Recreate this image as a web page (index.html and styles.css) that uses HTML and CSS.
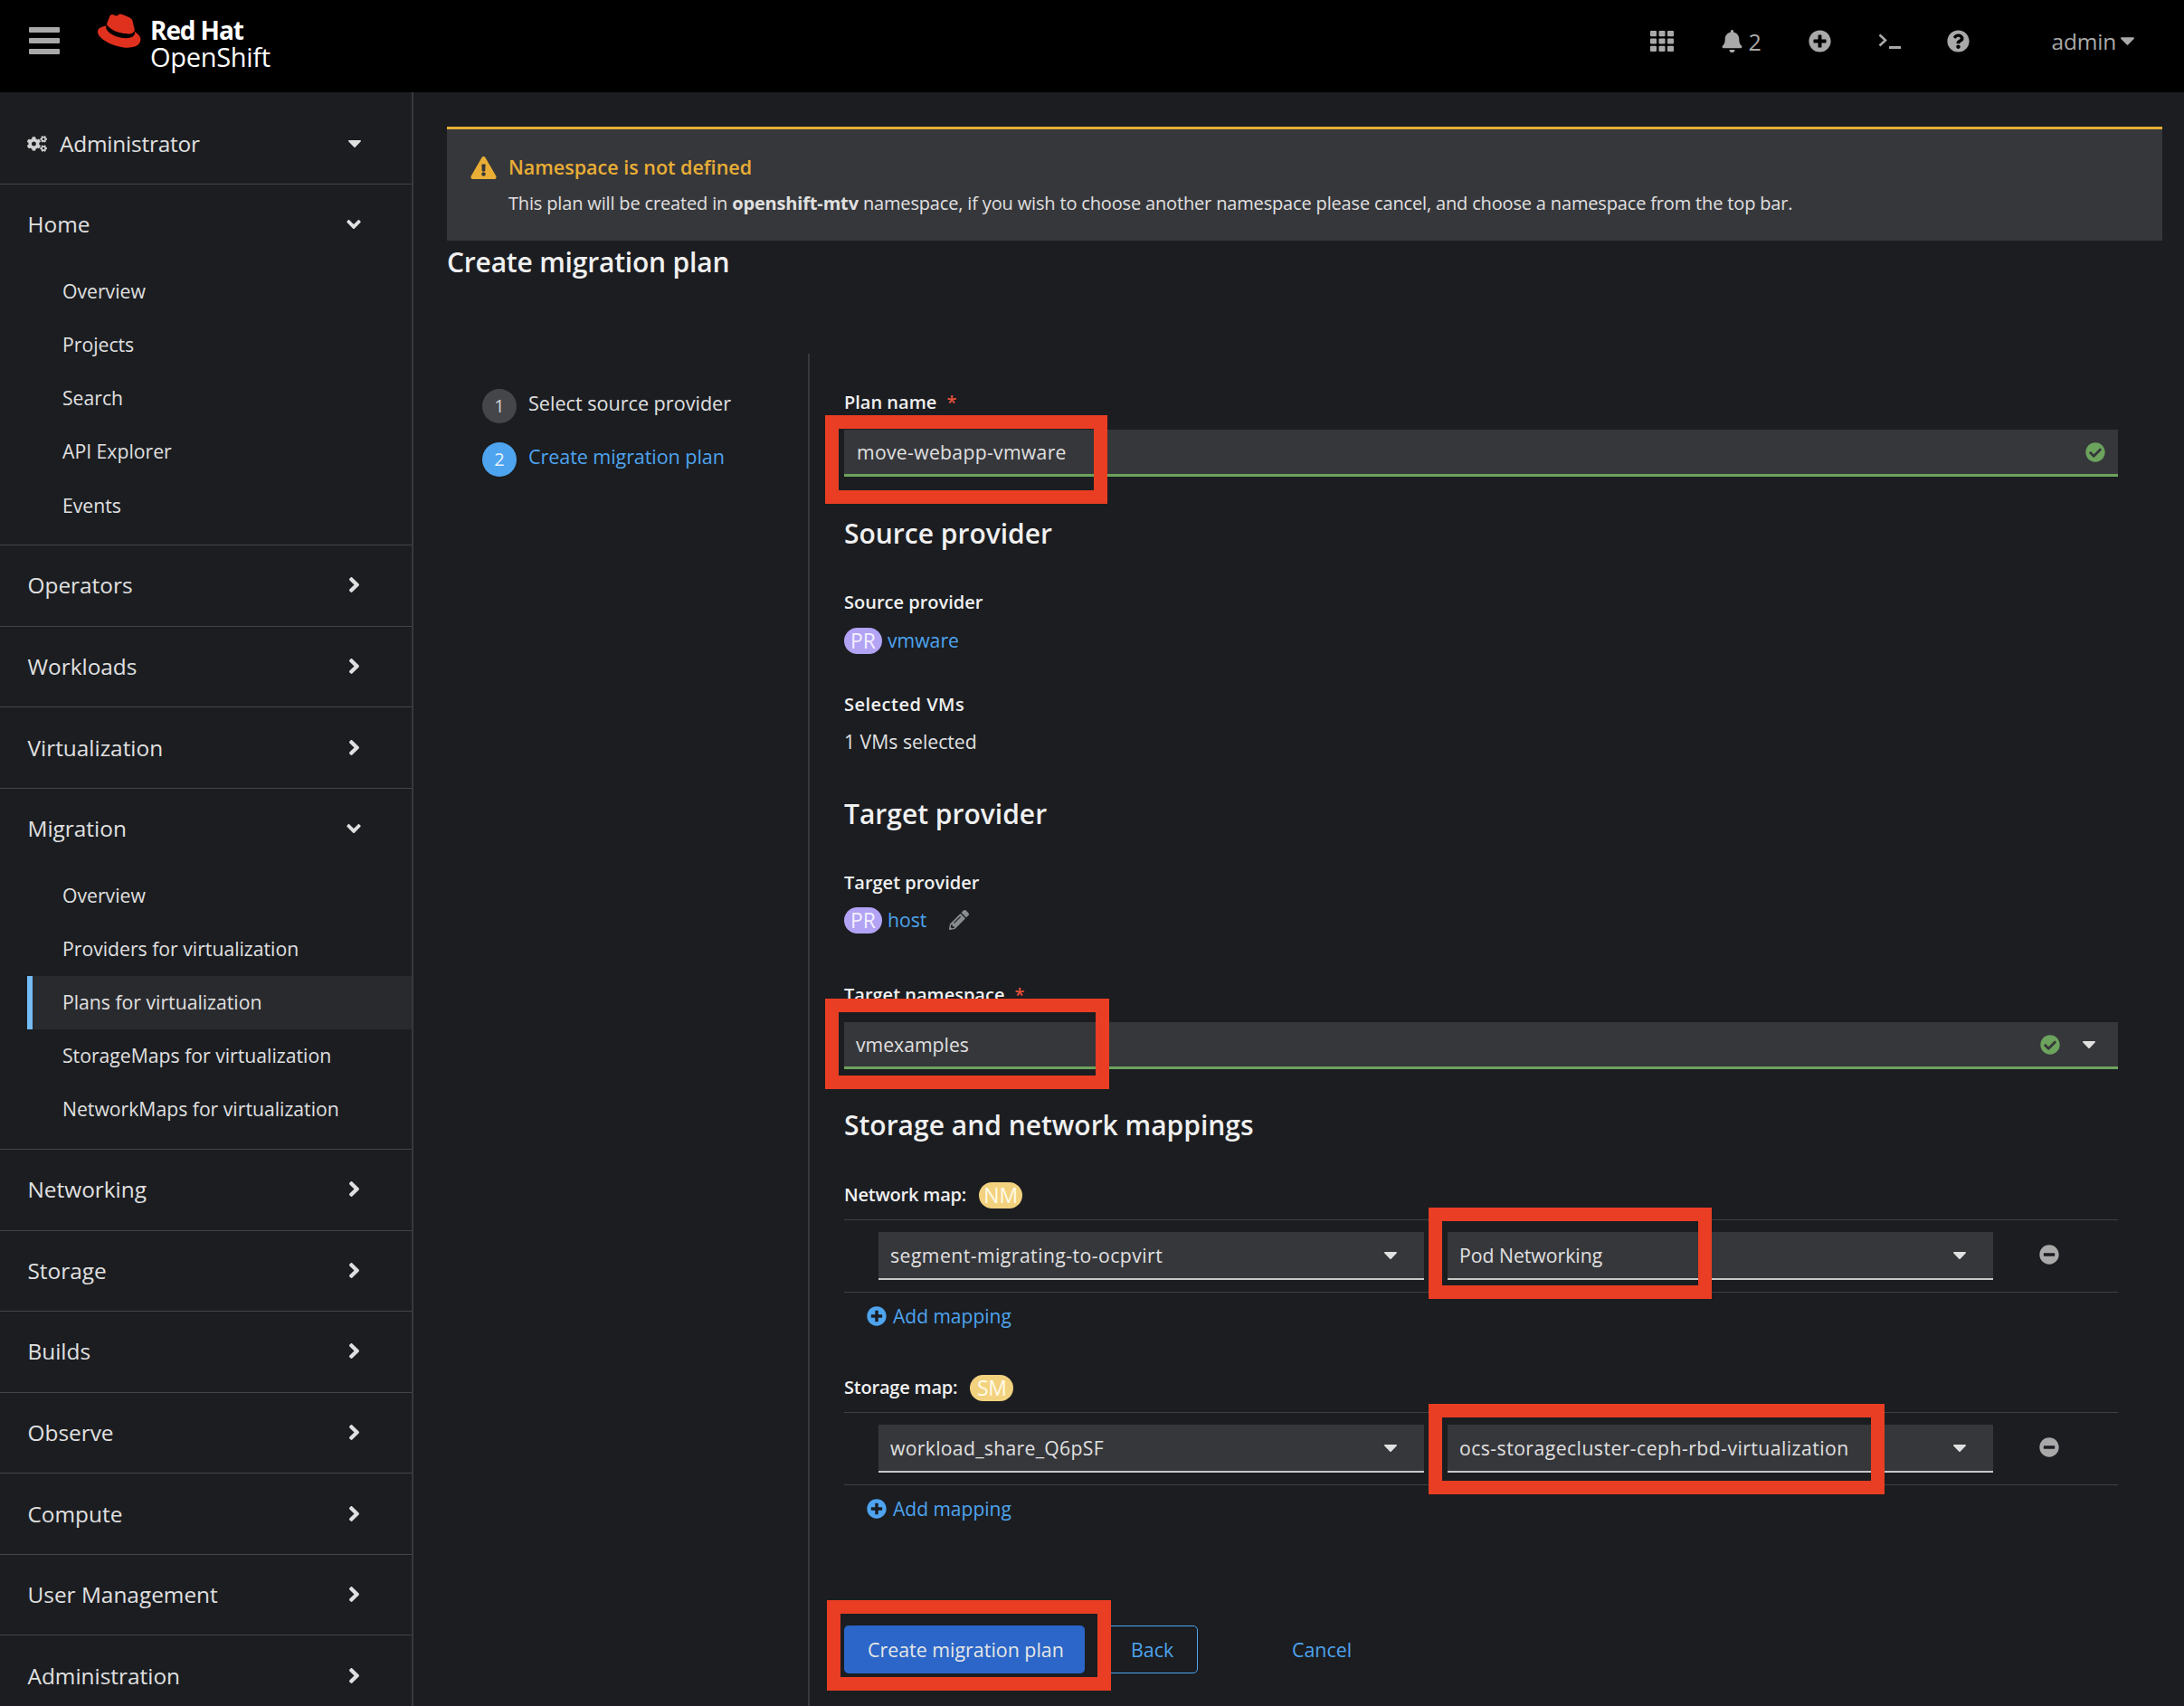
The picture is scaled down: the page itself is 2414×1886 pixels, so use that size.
FILE: index.html
```html
<!doctype html>
<html lang="en">
<head>
    <meta charset="UTF-8">
    <meta name="viewport" content="width=device-width, initial-scale=1.0">
    <title>Create migration plan</title>
    <link rel="stylesheet" href="styles.css">
</head>
<body>
    <svg class="icon-defs" width="0" height="0">
        <symbol id="caret" viewBox="10 192 300 170"><path d="M31.3 192h257.3c17.8 0 26.7 21.5 14.1 34.1L174.1 354.8c-7.8 7.8-20.5 7.8-28.3 0L17.2 226.1C4.6 213.5 13.5 192 31.3 192z"/></symbol>
        <symbol id="angle-down" viewBox="0 152 320 208"><path d="M143 352.3L7 216.3c-9.4-9.4-9.4-24.6 0-33.9l22.6-22.6c9.4-9.4 24.6-9.4 33.9 0l96.4 96.4 96.4-96.4c9.4-9.4 24.6-9.4 33.9 0l22.6 22.6c9.4 9.4 9.4 24.6 0 33.9l-136 136c-9.2 9.4-24.4 9.4-33.8 0z"/></symbol>
        <symbol id="angle-right" viewBox="24 96 208 320"><path d="M224.3 273l-136 136c-9.4 9.4-24.6 9.4-33.9 0l-22.6-22.6c-9.4-9.4-9.4-24.6 0-33.9l96.4-96.4-96.4-96.4c-9.4-9.4-9.4-24.6 0-33.9L54.3 103c9.4-9.4 24.6-9.4 33.9 0l136 136c9.5 9.4 9.5 24.6.1 34z"/></symbol>
        <symbol id="check-circle" viewBox="0 0 512 512"><path d="M504 256c0 136.967-111.033 248-248 248S8 392.967 8 256 119.033 8 256 8s248 111.033 248 248zM227.314 387.314l184-184c6.248-6.248 6.248-16.379 0-22.627l-22.627-22.627c-6.248-6.249-16.379-6.249-22.628 0L216 308.118l-70.059-70.059c-6.248-6.248-16.379-6.248-22.628 0l-22.627 22.627c-6.248 6.248-6.248 16.379 0 22.627l104 104c6.249 6.249 16.379 6.249 22.628.001z"/></symbol>
        <symbol id="plus-circle" viewBox="0 0 512 512"><path d="M256 8C119 8 8 119 8 256s111 248 248 248 248-111 248-248S393 8 256 8zm144 276c0 6.6-5.4 12-12 12h-92v92c0 6.6-5.4 12-12 12h-56c-6.6 0-12-5.4-12-12v-92h-92c-6.6 0-12-5.4-12-12v-56c0-6.6 5.4-12 12-12h92v-92c0-6.6 5.4-12 12-12h56c6.6 0 12 5.4 12 12v92h92c6.6 0 12 5.4 12 12v56z"/></symbol>
        <symbol id="minus-circle" viewBox="0 0 512 512"><path d="M256 8C119 8 8 119 8 256s111 248 248 248 248-111 248-248S393 8 256 8zM124 296c-6.6 0-12-5.4-12-12v-56c0-6.6 5.4-12 12-12h264c6.6 0 12 5.4 12 12v56c0 6.6-5.4 12-12 12H124z"/></symbol>
    </svg>

    <header class="masthead">
        <svg class="hamburger" viewBox="0 0 34 30"><rect y="0" width="34" height="6" rx="1"/><rect y="12" width="34" height="6" rx="1"/><rect y="24" width="34" height="6" rx="1"/></svg>
        <svg class="hat" viewBox="0 0 52 39"><path d="M34.5 22.5c3.3 0 8.2-.7 8.2-4.6 0-.3 0-.6-.1-.9l-2-8.6C40.1 6.5 39.7 5.6 36.4 3.9 33.8 2.6 28.2.4 26.5.4c-1.5 0-2 2-3.8 2-1.7 0-3-1.5-4.6-1.5-1.6 0-2.6 1-3.4 3.3 0 0-2.2 6.1-2.5 7-.05.2-.05.3-.05.5 0 2.4 9.4 10.3 22 10.3m8.4-3c.4 2.1.4 2.3.4 2.6 0 3.6-4 5.6-9.3 5.6-12 0-22.4-7-22.4-11.7 0-.7.1-1.3.4-1.9C7.4 14.6 2 15.4 2 20.2 2 28 20.6 37.7 35.3 37.7c11.3 0 14.1-5.1 14.1-9.1 0-3.2-2.7-6.8-7.6-8.9"/></svg>
        <div class="brand">
            <span class="brand-top">Red Hat</span>
            <span class="brand-bottom">OpenShift</span>
        </div>
        <div class="tools">
            <svg class="tool tool-grid" viewBox="0 0 26 23">
                <rect width="7" height="6.2" rx="1"/><rect x="9.5" width="7" height="6.2" rx="1"/><rect x="19" width="7" height="6.2" rx="1"/>
                <rect y="8.4" width="7" height="6.2" rx="1"/><rect x="9.5" y="8.4" width="7" height="6.2" rx="1"/><rect x="19" y="8.4" width="7" height="6.2" rx="1"/>
                <rect y="16.8" width="7" height="6.2" rx="1"/><rect x="9.5" y="16.8" width="7" height="6.2" rx="1"/><rect x="19" y="16.8" width="7" height="6.2" rx="1"/>
            </svg>
            <svg class="tool tool-bell" viewBox="0 0 448 512"><path d="M224 512c35.32 0 63.97-28.65 63.97-64H160.03c0 35.35 28.65 64 63.97 64zm215.39-149.71c-19.32-20.76-55.47-51.99-55.47-154.29 0-77.7-54.48-139.9-127.94-155.16V32c0-17.67-14.32-32-31.98-32s-31.98 14.33-31.98 32v20.84C118.56 68.1 64.08 130.3 64.08 208c0 102.3-36.15 133.53-55.47 154.29-6 6.45-8.66 14.16-8.61 21.71.11 16.4 12.98 32 32.1 32h383.8c19.12 0 32-15.6 32.1-32 .05-7.55-2.61-15.27-8.61-21.71z"/></svg>
            <span class="bell-count">2</span>
            <svg class="tool tool-plus"><use href="#plus-circle"/></svg>
            <svg class="tool tool-term" viewBox="0 0 25 17"><path d="M1.5 1.5 L8 7.5 L1.5 13.5" fill="none" stroke="currentColor" stroke-width="2.6"/><rect x="12" y="14" width="13" height="3"/></svg>
            <svg class="tool tool-help" viewBox="0 0 512 512"><path d="M504 256c0 136.997-111.043 248-248 248S8 392.997 8 256C8 119.083 119.043 8 256 8s248 111.083 248 248zM262.655 90c-54.497 0-89.255 22.957-116.549 63.758-3.536 5.286-2.353 12.415 2.715 16.258l34.699 26.31c5.205 3.947 12.621 3.008 16.665-2.122 17.864-22.658 30.113-35.797 57.303-35.797 20.429 0 45.698 13.148 45.698 32.958 0 14.976-12.363 22.667-32.534 33.976C247.128 238.528 216 254.941 216 296v4c0 6.627 5.373 12 12 12h56c6.627 0 12-5.373 12-12v-1.333c0-28.462 83.186-29.647 83.186-106.667 0-58.002-60.165-102-116.531-102zM256 338c-25.365 0-46 20.635-46 46 0 25.364 20.635 46 46 46s46-20.636 46-46c0-25.365-20.635-46-46-46z"/></svg>
            <span class="user">admin</span>
            <svg class="user-caret"><use href="#caret"/></svg>
        </div>
    </header>

    <div class="layout">
        <nav class="sidebar">
            <div class="role">
                <svg class="role-icon" viewBox="0 0 640 512"><path d="M512.1 191l-8.2 14.3c-3 5.3-9.4 7.5-15.1 5.4-11.8-4.4-22.6-10.7-32.1-18.6-4.6-3.8-5.8-10.5-2.8-15.7l8.2-14.3c-6.9-8-12.3-17.3-15.9-27.4h-16.5c-6 0-11.2-4.3-12.2-10.3-2-12-2.1-24.6 0-37.1 1-6 6.2-10.4 12.2-10.4h16.5c3.6-10.1 9-19.4 15.9-27.4l-8.2-14.3c-3-5.2-1.9-11.9 2.8-15.7 9.5-7.9 20.4-14.2 32.1-18.6 5.7-2.1 12.1.1 15.1 5.4l8.2 14.3c10.5-1.9 21.2-1.9 31.7 0L552 6.3c3-5.3 9.4-7.5 15.1-5.4 11.8 4.4 22.6 10.7 32.1 18.6 4.6 3.8 5.8 10.5 2.8 15.7l-8.2 14.3c6.9 8 12.3 17.3 15.9 27.4h16.5c6 0 11.2 4.3 12.2 10.3 2 12 2.1 24.6 0 37.1-1 6-6.2 10.4-12.2 10.4h-16.5c-3.6 10.1-9 19.4-15.9 27.4l8.2 14.3c3 5.2 1.9 11.9-2.8 15.7-9.5 7.9-20.4 14.2-32.1 18.6-5.7 2.1-12.1-.1-15.1-5.4l-8.2-14.3c-10.4 1.9-21.2 1.9-31.7 0zm-10.5-58.8c38.5 29.6 82.4-14.3 52.8-52.8-38.5-29.7-82.4 14.3-52.8 52.8zM386.3 286.1l33.7 16.8c10.1 5.8 14.5 18.1 10.5 29.1-8.9 24.2-26.4 46.4-42.6 65.8-7.4 8.9-20.2 11.1-30.3 5.3l-29.1-16.8c-16 13.7-34.6 24.6-54.9 31.7v33.6c0 11.6-8.3 21.6-19.7 23.6-24.6 4.2-50.4 4.4-75.9 0-11.5-2-20-11.9-20-23.6V418c-20.3-7.2-38.9-18-54.9-31.7L74 403c-10 5.8-22.9 3.6-30.3-5.3-16.2-19.4-33.3-41.6-42.2-65.7-4-10.9.4-23.2 10.5-29.1l33.3-16.8c-3.9-20.9-3.9-42.4 0-63.4L12 205.8c-10.1-5.8-14.6-18.1-10.5-29 8.9-24.2 26-46.4 42.2-65.8 7.4-8.9 20.2-11.1 30.3-5.3l29.1 16.8c16-13.7 34.6-24.6 54.9-31.7V57.1c0-11.5 8.2-21.5 19.6-23.5 24.6-4.2 50.5-4.4 76-.1 11.5 2 20 11.9 20 23.6v33.6c20.3 7.2 38.9 18 54.9 31.7l29.1-16.8c10-5.8 22.9-3.6 30.3 5.3 16.2 19.4 33.2 41.6 42.1 65.8 4 10.9.1 23.2-10 29.1l-33.7 16.8c3.9 21 3.9 42.5 0 63.5zm-117.6 21.1c59.2-77-28.7-164.9-105.7-105.7-59.2 77 28.7 164.9 105.7 105.7zm243.4 182.7l-8.2 14.3c-3 5.3-9.4 7.5-15.1 5.4-11.8-4.4-22.6-10.7-32.1-18.6-4.6-3.8-5.8-10.5-2.8-15.7l8.2-14.3c-6.9-8-12.3-17.3-15.9-27.4h-16.5c-6 0-11.2-4.3-12.2-10.3-2-12-2.1-24.6 0-37.1 1-6 6.2-10.4 12.2-10.4h16.5c3.6-10.1 9-19.4 15.9-27.4l-8.2-14.3c-3-5.2-1.9-11.9 2.8-15.7 9.5-7.9 20.4-14.2 32.1-18.6 5.7-2.1 12.1.1 15.1 5.4l8.2 14.3c10.5-1.9 21.2-1.9 31.7 0l8.2-14.3c3-5.3 9.4-7.5 15.1-5.4 11.8 4.4 22.6 10.7 32.1 18.6 4.6 3.8 5.8 10.5 2.8 15.7l-8.2 14.3c6.9 8 12.3 17.3 15.9 27.4h16.5c6 0 11.2 4.3 12.2 10.3 2 12 2.1 24.6 0 37.1-1 6-6.2 10.4-12.2 10.4h-16.5c-3.6 10.1-9 19.4-15.9 27.4l8.2 14.3c3 5.2 1.9 11.9-2.8 15.7-9.5 7.9-20.4 14.2-32.1 18.6-5.7 2.1-12.1-.1-15.1-5.4l-8.2-14.3c-10.4 1.9-21.2 1.9-31.7 0zM501.6 431c38.5 29.6 82.4-14.3 52.8-52.8-38.5-29.6-82.4 14.3-52.8 52.8z"/></svg>
                <span class="role-name">Administrator</span>
                <svg class="role-caret"><use href="#caret"/></svg>
            </div>

            <div class="nav-group">
                <div class="nav-head">Home<svg class="chev-down"><use href="#angle-down"/></svg></div>
                <ul class="sub-list">
                    <li class="sub-item">Overview</li>
                    <li class="sub-item">Projects</li>
                    <li class="sub-item">Search</li>
                    <li class="sub-item">API Explorer</li>
                    <li class="sub-item">Events</li>
                </ul>
            </div>
            <div class="nav-group"><div class="nav-head">Operators<svg class="chev-right"><use href="#angle-right"/></svg></div></div>
            <div class="nav-group"><div class="nav-head">Workloads<svg class="chev-right"><use href="#angle-right"/></svg></div></div>
            <div class="nav-group"><div class="nav-head">Virtualization<svg class="chev-right"><use href="#angle-right"/></svg></div></div>
            <div class="nav-group">
                <div class="nav-head">Migration<svg class="chev-down"><use href="#angle-down"/></svg></div>
                <ul class="sub-list">
                    <li class="sub-item">Overview</li>
                    <li class="sub-item">Providers for virtualization</li>
                    <li class="sub-item sub-current">Plans for virtualization</li>
                    <li class="sub-item">StorageMaps for virtualization</li>
                    <li class="sub-item">NetworkMaps for virtualization</li>
                </ul>
            </div>
            <div class="nav-group"><div class="nav-head">Networking<svg class="chev-right"><use href="#angle-right"/></svg></div></div>
            <div class="nav-group"><div class="nav-head">Storage<svg class="chev-right"><use href="#angle-right"/></svg></div></div>
            <div class="nav-group"><div class="nav-head">Builds<svg class="chev-right"><use href="#angle-right"/></svg></div></div>
            <div class="nav-group"><div class="nav-head">Observe<svg class="chev-right"><use href="#angle-right"/></svg></div></div>
            <div class="nav-group"><div class="nav-head">Compute<svg class="chev-right"><use href="#angle-right"/></svg></div></div>
            <div class="nav-group"><div class="nav-head">User Management<svg class="chev-right"><use href="#angle-right"/></svg></div></div>
            <div class="nav-group"><div class="nav-head">Administration<svg class="chev-right"><use href="#angle-right"/></svg></div></div>
        </nav>

        <main class="content">
            <div class="alert">
                <svg class="alert-icon" viewBox="0 0 576 512"><path d="M569.517 440.013C587.975 472.007 564.806 512 527.94 512H48.054c-36.937 0-59.999-40.055-41.577-71.987L246.423 23.985c18.467-32.009 64.72-31.951 83.154 0l239.94 416.028zM288 354c-25.405 0-46 20.595-46 46s20.595 46 46 46 46-20.595 46-46-20.595-46-46-46zm-43.673-165.346l7.418 136c.347 6.364 5.609 11.346 11.982 11.346h48.546c6.373 0 11.635-4.982 11.982-11.346l7.418-136c.375-6.874-5.098-12.654-11.982-12.654h-63.383c-6.884 0-12.356 5.78-11.981 12.654z"/></svg>
                <div>
                    <div class="alert-title">Namespace is not defined</div>
                    <div class="alert-body">This plan will be created in <b>openshift-mtv</b> namespace, if you wish to choose another namespace please cancel, and choose a namespace from the top bar.</div>
                </div>
            </div>
            <h1 class="page-title">Create migration plan</h1>

            <div class="wizard">
                <ol class="steps">
                    <li class="step"><span class="step-num">1</span><span class="step-text">Select source provider</span></li>
                    <li class="step step-current"><span class="step-num">2</span><span class="step-text">Create migration plan</span></li>
                </ol>

                <form class="plan-form">
                    <div class="label label-first">Plan name <span class="req">*</span></div>
                    <div class="input input-ok">
                        <span class="input-text hyphened">move-webapp-vmware</span>
                        <svg class="ok-icon"><use href="#check-circle"/></svg>
                    </div>

                    <h2 class="section">Source provider</h2>
                    <div class="label">Source provider</div>
                    <div class="value"><span class="badge badge-pr">PR</span><a class="link">vmware</a></div>
                    <div class="label label-next">Selected VMs</div>
                    <div class="value value-tight">1 VMs selected</div>

                    <h2 class="section section-b">Target provider</h2>
                    <div class="label">Target provider</div>
                    <div class="value value-tight">
                        <span class="badge badge-pr">PR</span><a class="link">host</a>
                        <svg class="pencil" viewBox="0 0 512 512"><path d="M497.9 142.1l-46.1 46.1c-4.7 4.7-12.3 4.7-17 0l-111-111c-4.7-4.7-4.7-12.3 0-17l46.1-46.1c18.7-18.7 49.1-18.7 67.9 0l60.1 60.1c18.8 18.7 18.8 49.1 0 67.9zM284.2 99.8L21.6 362.4.4 483.9c-2.9 16.4 11.4 30.6 27.8 27.8l121.5-21.3 262.6-262.6c4.7-4.7 4.7-12.3 0-17l-111-111c-4.8-4.7-12.4-4.7-17.1 0zM124.1 339.9c-5.5-5.5-5.5-14.3 0-19.8l154-154c5.5-5.5 14.3-5.5 19.8 0s5.5 14.3 0 19.8l-154 154c-5.5 5.5-14.3 5.5-19.8 0zM88 424h48v36.3l-64.5 11.3-31.1-31.1L51.7 376H88v48z"/></svg>
                    </div>
                    <div class="label label-ns">Target namespace <span class="req">*</span></div>
                    <div class="input input-ok input-ns">
                        <span class="input-text">vmexamples</span>
                        <svg class="ok-icon"><use href="#check-circle"/></svg>
                        <svg class="select-caret"><use href="#caret"/></svg>
                    </div>

                    <h2 class="section section-c">Storage and network mappings</h2>
                    <div class="label map-label">Network map: <span class="badge badge-map">NM</span></div>
                    <div class="map-row">
                        <div class="select"><span class="hyphened-long">segment-migrating-to-ocpvirt</span><svg class="select-caret"><use href="#caret"/></svg></div>
                        <div class="select"><span>Pod Networking</span><svg class="select-caret"><use href="#caret"/></svg></div>
                        <svg class="minus"><use href="#minus-circle"/></svg>
                    </div>
                    <a class="add-map"><svg class="add-icon"><use href="#plus-circle"/></svg>Add mapping</a>

                    <div class="label map-label map-label-b">Storage map: <span class="badge badge-map">SM</span></div>
                    <div class="map-row">
                        <div class="select"><span class="hyphened">workload_share_Q6pSF</span><svg class="select-caret"><use href="#caret"/></svg></div>
                        <div class="select"><span class="hyphened-long">ocs-storagecluster-ceph-rbd-virtualization</span><svg class="select-caret"><use href="#caret"/></svg></div>
                        <svg class="minus"><use href="#minus-circle"/></svg>
                    </div>
                    <a class="add-map"><svg class="add-icon"><use href="#plus-circle"/></svg>Add mapping</a>

                    <div class="actions">
                        <button type="button" class="btn btn-primary">Create migration plan</button>
                        <button type="button" class="btn btn-secondary">Back</button>
                        <button type="button" class="btn btn-link">Cancel</button>
                    </div>
                </form>
            </div>
        </main>
    </div>

    <!-- red annotation boxes drawn over the screenshot -->
    <div class="mark mark-plan"></div>
    <div class="mark mark-ns"></div>
    <div class="mark mark-pod"></div>
    <div class="mark mark-ocs"></div>
    <div class="mark mark-create"></div>
</body>
</html>
```

FILE: styles.css
```css
* {
    box-sizing: border-box;
}
html, body {
    height: 100%;
}
body {
    margin: 0;
    position: relative;
    display: flex;
    flex-direction: column;
    height: 1886px;
    overflow: hidden;
    background: #1b1d21;
    color: #e0e0e0;
    font-family: "Open Sans", "Liberation Sans", sans-serif;
    font-size: 21px;
}
.icon-defs {
    position: absolute;
}
svg {
    fill: currentColor;
    flex: none;
    display: block;
}

/* masthead */
.masthead {
    height: 102px;
    flex: none;
    background: #000;
    display: flex;
    align-items: center;
    color: #a9a9a9;
}
.hamburger {
    width: 34px;
    height: 30px;
    margin: -12px 0 0 32px;
}
.hat {
    width: 52px;
    height: 39px;
    margin: -34px 0 0 40px;
    color: #e0301e;
}
.brand {
    margin: -7px 0 0 8px;
    color: #fff;
    display: flex;
    flex-direction: column;
    line-height: 29px;
}
.brand-top {
    font-size: 28px;
    font-weight: 700;
    letter-spacing: -1.1px;
}
.brand-bottom {
    font-size: 29px;
    letter-spacing: -.3px;
}
.tools {
    margin-left: auto;
    display: flex;
    align-items: center;
    height: 100%;
    padding-right: 55px;
    margin-top: -11px;
}
.tool-grid {
    width: 26px;
    height: 23px;
}
.tool-bell {
    width: 23px;
    height: 25px;
    margin-left: 53px;
}
.bell-count {
    font-size: 25px;
    margin-left: 7px;
    width: 13px;
}
.tool-plus {
    width: 25px;
    height: 25px;
    margin-left: 53px;
}
.tool-term {
    width: 25px;
    height: 17px;
    margin-left: 52px;
}
.tool-help {
    width: 25px;
    height: 25px;
    margin-left: 51px;
}
.user {
    font-size: 24.5px;
    margin: 0 0 0 91px;
    letter-spacing: -.2px;
}
.user-caret {
    width: 15px;
    height: 9px;
    margin-left: 5px;
}

.layout {
    flex: 1;
    display: flex;
    min-height: 0;
}

/* sidebar */
.sidebar {
    width: 457px;
    flex: none;
    border-right: 2px solid #37393d;
    overflow: hidden;
}
.role {
    height: 102px;
    display: flex;
    align-items: center;
    padding: 12px 56px 0 30px;
    border-bottom: 1px solid #444548;
    font-size: 24.4px;
    letter-spacing: -.2px;
}
.role-icon {
    width: 22px;
    height: 18px;
    color: #d2d2d2;
}
.role-name {
    margin-left: 14px;
}
.role-caret {
    width: 14px;
    height: 8px;
    margin-left: auto;
}
.nav-group {
    border-bottom: 1px solid #444548;
}
.nav-head {
    height: 88.6px;
    display: flex;
    align-items: center;
    justify-content: space-between;
    padding: 0 56px 1px 30.5px;
    font-size: 24.4px;
}
.chev-down {
    width: 16px;
    height: 10px;
}
.chev-right {
    width: 11px;
    height: 17px;
    margin-right: 2px;
}
.sub-list {
    list-style: none;
    margin: 0;
    padding: 0 0 14px 30px;
}
.sub-item {
    height: 59.1px;
    display: flex;
    align-items: center;
    padding: 0 0 1px 39px;
    font-size: 21.2px;
}
.sub-current {
    background: #292a2e;
    border-left: 6px solid #73bcf7;
    padding-left: 33px;
}

/* main area */
.content {
    flex: 1;
    min-width: 0;
    padding: 38px 24px 0 37px;
}
.alert {
    height: 126px;
    background: #36373b;
    border-top: 3px solid #e9ae35;
    display: flex;
    padding: 30px 0 0 26px;
}
.alert-icon {
    width: 29px;
    height: 25px;
    color: #e9ae35;
    margin-right: 13px;
}
.alert-title {
    color: #e9ae35;
    font-weight: 600;
    font-size: 21.5px;
    line-height: 24px;
}
.alert-body {
    font-size: 20px;
    line-height: 28px;
    margin-top: 14px;
    letter-spacing: -.16px;
}
.alert-body b {
    font-weight: 700;
}
.page-title {
    margin: 0;
    height: 125px;
    font-size: 30px;
    line-height: 48px;
    font-weight: 600;
    color: #f0f0f0;
    letter-spacing: -.2px;
}
.wizard {
    display: flex;
    height: 1495px;
}
.steps {
    list-style: none;
    margin: 0;
    width: 401px;
    flex: none;
    padding: 38px 0 0 39px;
    border-right: 2px solid #37393d;
}
.step {
    display: flex;
    align-items: center;
    height: 39px;
    margin-bottom: 20px;
    font-size: 21.6px;
}
.step-text {
    margin-bottom: 7px;
}
.step-num {
    width: 38px;
    height: 38px;
    border-radius: 50%;
    background: #45464a;
    color: #d2d2d2;
    display: flex;
    align-items: center;
    justify-content: center;
    margin-right: 13px;
    font-size: 20px;
}
.step-current {
    color: #4ea4ee;
}
.step-current .step-text {
    letter-spacing: -.1px;
}
.step-current .step-num {
    background: #4ea4ee;
    color: #e6f2fc;
}
.plan-form {
    flex: 1;
    min-width: 0;
    padding: 0 49px 0 38px;
    display: flex;
    flex-direction: column;
    align-items: flex-start;
}
.label {
    font-size: 20px;
    font-weight: 600;
    line-height: 30px;
    margin-top: 39px;
    color: #f0f0f0;
    white-space: nowrap;
}
.label-next {
    margin-top: 40px;
    letter-spacing: .5px;
}
.label-ns {
    margin-top: 52px;
}
.req {
    color: #e8503a;
    margin-left: 6px;
}
.input {
    width: 100%;
    height: 52px;
    margin-top: 15px;
    background: #36373b;
    display: flex;
    align-items: center;
    padding: 0 14px 0 14px;
    font-size: 21.2px;
}
.input-ok {
    border-bottom: 3px solid #6ca35d;
}
.input-text {
    flex: 1;
}
.hyphened {
    letter-spacing: .3px;
}
.hyphened-long {
    letter-spacing: .45px;
}
.ok-icon {
    width: 22px;
    height: 22px;
    color: #6ca35d;
}
.input-ns {
    padding-right: 25px;
    padding-left: 13px;
}
.input-ns .ok-icon {
    margin-right: 25px;
}
.select-caret {
    width: 14px;
    height: 8px;
    color: #e0e0e0;
}
.section {
    margin: 41px 0 0;
    font-size: 30px;
    line-height: 44px;
    font-weight: 600;
    color: #f0f0f0;
    white-space: nowrap;
}
.section-b {
    margin-top: 42px;
}
.section-c {
    margin-top: 40px;
}
.value {
    margin-top: 13px;
    height: 30px;
    display: flex;
    align-items: flex-start;
    line-height: 27px;
    font-size: 21.2px;
}
.value-tight {
    margin-top: 12px;
}
.badge {
    display: inline-flex;
    align-items: center;
    justify-content: center;
    height: 29px;
    border-radius: 15px;
    color: #f3f0ff;
}
.badge-pr {
    width: 42px;
    background: #b2a3f5;
    font-size: 23px;
    margin-right: 6px;
}
.badge-map {
    width: 48px;
    background: #f3d27f;
    color: #fffbe8;
    font-size: 23px;
    font-weight: 500;
    margin-left: 14px;
}
.link {
    color: #4ea4ee;
}
.pencil {
    width: 22px;
    height: 22px;
    margin: 3px 0 0 25px;
    color: #8a8d90;
}
.map-label {
    margin-top: 40px;
    display: flex;
    align-items: center;
    width: 100%;
    letter-spacing: -.2px;
}
.map-label-b {
    margin-top: 49px;
}
.map-row {
    width: 100%;
    margin-top: 12px;
    height: 81px;
    border-top: 1px solid #3f4044;
    border-bottom: 1px solid #3f4044;
    display: flex;
    align-items: flex-start;
    padding: 13px 0 0 38px;
}
.select {
    width: 603px;
    height: 53px;
    background: #36373b;
    border-bottom: 2px solid #c7c7c7;
    display: flex;
    align-items: center;
    justify-content: space-between;
    padding: 0 30px 0 13px;
    font-size: 21.2px;
    margin-right: 26px;
}
.minus {
    width: 22px;
    height: 22px;
    margin: 14px 0 0 25px;
    color: #a9a9a9;
}
.add-map {
    margin: 11px 0 0 25px;
    display: flex;
    align-items: center;
    height: 30px;
    color: #4ea4ee;
    font-size: 21px;
}
.add-icon {
    width: 22px;
    height: 22px;
    margin-right: 7px;
}
.actions {
    margin-top: 114px;
    display: flex;
}
.btn {
    height: 53px;
    font: inherit;
    font-size: 21.4px;
    border-radius: 5px;
    padding: 0 26px;
    background: none;
    border: 0;
    color: #4ea4ee;
    white-space: nowrap;
}
.btn-primary {
    width: 266px;
    background: #2b66c8;
    color: #e6e6e6;
    margin-right: 24px;
}
.btn-secondary {
    width: 101px;
    border: 1px solid #4ea4ee;
    margin-right: 78px;
}
.btn-link {
    padding: 0;
    margin-left: 26px;
}

/* annotations */
.mark {
    position: absolute;
    border: 15px solid #e93e23;
    z-index: 5;
}
.mark-plan {
    left: 912px;
    top: 459px;
    width: 312px;
    height: 98px;
}
.mark-ns {
    left: 912px;
    top: 1104px;
    width: 314px;
    height: 100px;
}
.mark-pod {
    left: 1579px;
    top: 1335px;
    width: 313px;
    height: 101px;
}
.mark-ocs {
    left: 1579px;
    top: 1552px;
    width: 504px;
    height: 100px;
}
.mark-create {
    left: 914px;
    top: 1769px;
    width: 314px;
    height: 100px;
}
```
